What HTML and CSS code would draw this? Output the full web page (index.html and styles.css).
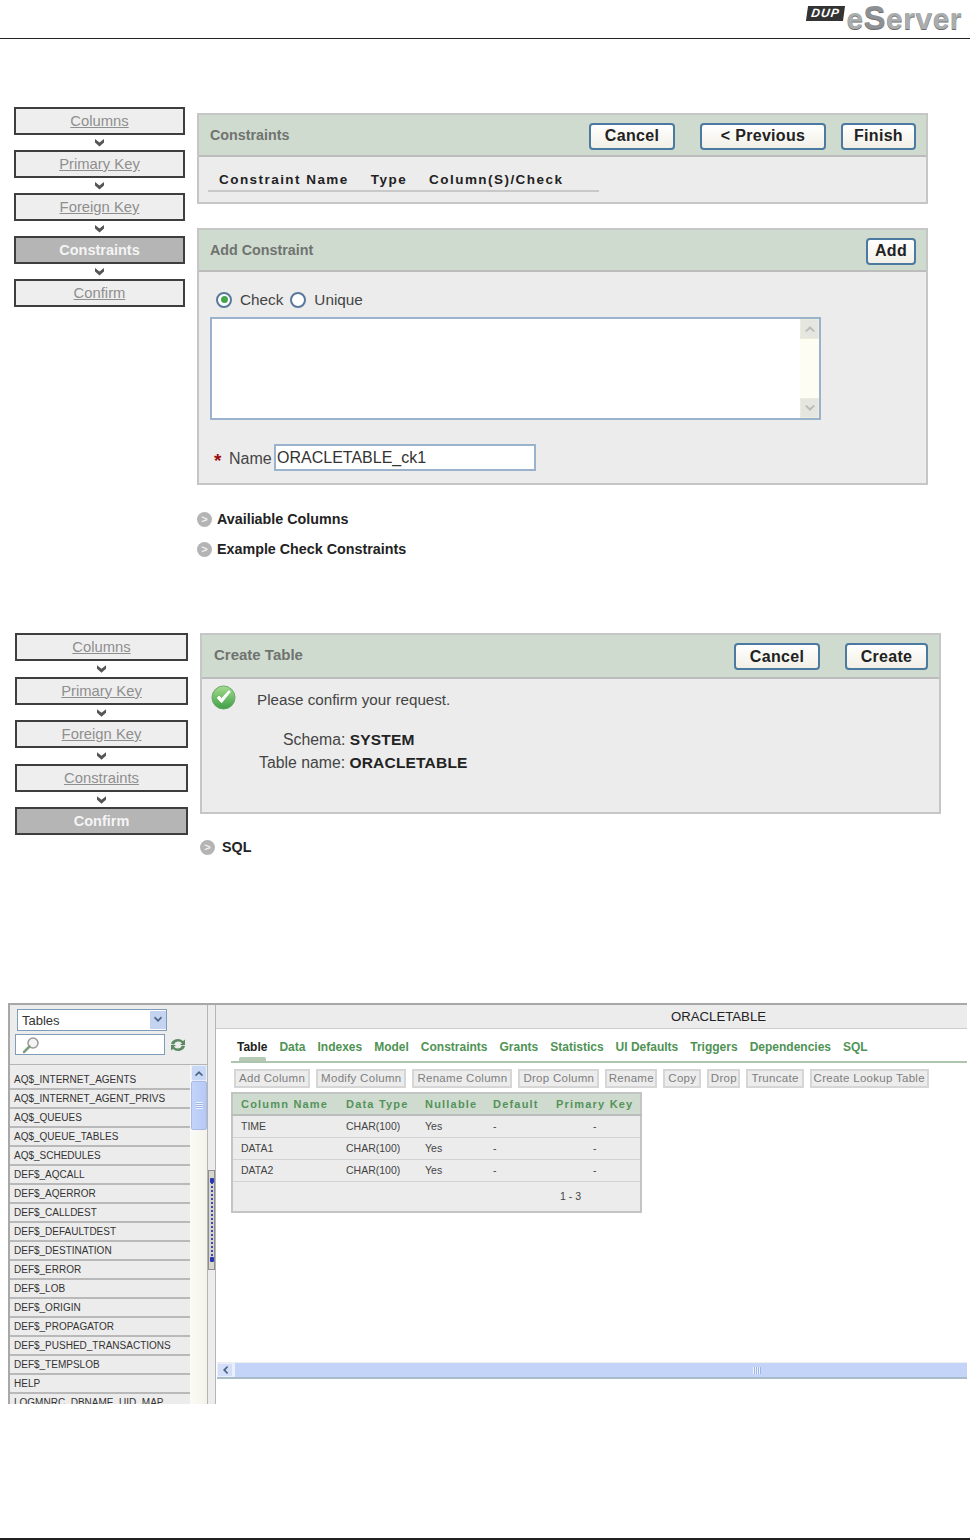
FILE: index.html
```html
<!DOCTYPE html>
<html lang="en">
<head>
<meta charset="utf-8">
<title>Create Table</title>
<link rel="stylesheet" href="styles.css">
</head>
<body>
<div class="page">
  <header class="top">
    <div class="logo">
      <span class="dup">DUP</span>
      <span class="eserver">e<b>S</b>erver</span>
    </div>
  </header>

  <section class="wiz wiz-one">
    <nav class="steps">
      <a class="step">Columns</a>
      <svg class="arrow" viewBox="0 0 15 15"><path d="M3 4l4.500 3.500L12 4v3.500L7.500 11.500 3 7.500z"/></svg>
      <a class="step">Primary Key</a>
      <svg class="arrow" viewBox="0 0 15 15"><path d="M3 4l4.500 3.500L12 4v3.500L7.500 11.500 3 7.500z"/></svg>
      <a class="step">Foreign Key</a>
      <svg class="arrow" viewBox="0 0 15 15"><path d="M3 4l4.500 3.500L12 4v3.500L7.500 11.500 3 7.500z"/></svg>
      <a class="step on">Constraints</a>
      <svg class="arrow" viewBox="0 0 15 15"><path d="M3 4l4.500 3.500L12 4v3.500L7.500 11.500 3 7.500z"/></svg>
      <a class="step">Confirm</a>
    </nav>
    <div class="main main-one">
      <div class="panel">
        <div class="phead">
          <h2>Constraints</h2>
          <button class="btn w-cancel">Cancel</button>
          <button class="btn w-prev">&lt; Previous</button>
          <button class="btn w-finish">Finish</button>
        </div>
        <div class="pbody cons-body">
          <div class="cons-cols"><span>Constraint Name</span><span>Type</span><span>Column(S)/Check</span></div>
        </div>
      </div>
      <div class="panel panel-add">
        <div class="phead">
          <h2>Add Constraint</h2>
          <button class="btn w-add">Add</button>
        </div>
        <div class="pbody add-body">
          <div class="radios">
            <span class="radio picked"></span><span class="rlabel">Check</span>
            <span class="radio"></span><span class="rlabel">Unique</span>
          </div>
          <div class="area">
            <div class="area-blank"></div>
            <div class="area-bar">
              <span class="area-btn"><svg viewBox="0 0 14 14"><path d="M2 9l5-5 5 5-1.500 1L7 7l-3.500 3z"/></svg></span>
              <span class="area-btn"><svg viewBox="0 0 14 14"><path d="M2 5l5 5 5-5-1.500-1L7 7 3.500 4z"/></svg></span>
            </div>
          </div>
          <div class="name-row">
            <span class="req">*</span><label>Name</label><input class="name-in" type="text" value="ORACLETABLE_ck1">
          </div>
        </div>
      </div>
      <div class="exp exp-first"><span class="exp-i">&gt;</span>Availiable Columns</div>
      <div class="exp exp-next"><span class="exp-i">&gt;</span>Example Check Constraints</div>
    </div>
  </section>

  <section class="wiz wiz-two">
    <nav class="steps">
      <a class="step">Columns</a>
      <svg class="arrow" viewBox="0 0 15 15"><path d="M3 4l4.500 3.500L12 4v3.500L7.500 11.500 3 7.500z"/></svg>
      <a class="step">Primary Key</a>
      <svg class="arrow" viewBox="0 0 15 15"><path d="M3 4l4.500 3.500L12 4v3.500L7.500 11.500 3 7.500z"/></svg>
      <a class="step">Foreign Key</a>
      <svg class="arrow" viewBox="0 0 15 15"><path d="M3 4l4.500 3.500L12 4v3.500L7.500 11.500 3 7.500z"/></svg>
      <a class="step">Constraints</a>
      <svg class="arrow" viewBox="0 0 15 15"><path d="M3 4l4.500 3.500L12 4v3.500L7.500 11.500 3 7.500z"/></svg>
      <a class="step on">Confirm</a>
    </nav>
    <div class="main main-two">
      <div class="panel">
        <div class="phead phead-two">
          <h2>Create Table</h2>
          <button class="btn w-cancel2">Cancel</button>
          <button class="btn w-create">Create</button>
        </div>
        <div class="pbody conf-body">
          <svg class="ok" viewBox="0 0 26 26">
            <defs><linearGradient id="okg" x1="0" y1="0" x2="0" y2="1"><stop offset="0" stop-color="#a5dc8f"/><stop offset="1" stop-color="#3f9f45"/></linearGradient></defs>
            <circle cx="13" cy="13" r="12" fill="url(#okg)" stroke="#6aa96c"/>
            <path d="M6.500 13.500l4.500 5 9-11.500-1.500-1-7.500 8-2.500-2.500z" fill="#fff" stroke="#fff"/>
          </svg>
          <div class="conf-msg">Please confirm your request.</div>
          <div class="conf-line conf-schema">Schema: <b>SYSTEM</b></div>
          <div class="conf-line conf-table">Table name: <b>ORACLETABLE</b></div>
        </div>
      </div>
      <div class="exp exp-sql"><span class="exp-i">&gt;</span>SQL</div>
    </div>
  </section>

  <section class="browser">
    <aside class="left">
      <div class="left-top">
        <div class="sel">Tables<span class="sel-btn"><svg viewBox="0 0 14 14"><path d="M3 5l4 4 4-4-1-1.500L7 6.500 4 3.500z"/></svg></span></div>
        <div class="search-row">
          <div class="search">
            <svg viewBox="0 0 18 18"><circle cx="11" cy="7" r="5" fill="#f4f4f4" stroke="#999" stroke-width="1.500"/><path d="M7.500 10.500L2 16" stroke="#7fa07f" stroke-width="2.500" stroke-linecap="round"/></svg>
          </div>
          <svg class="refresh" viewBox="0 0 18 18"><path d="M2 8a7 6 0 0 1 12-3l2-1.500V9h-5l2-1.800A4.500 4 0 0 0 5 8.500z" fill="#5d8a66"/><path d="M16 10a7 6 0 0 1-12 3l-2 1.500V9h5l-2 1.800A4.500 4 0 0 0 13 9.500z" fill="#5d8a66"/></svg>
        </div>
      </div>
      <div class="list-wrap">
        <ul class="list">
          <li>AQ$_INTERNET_AGENTS</li>
          <li>AQ$_INTERNET_AGENT_PRIVS</li>
          <li>AQ$_QUEUES</li>
          <li>AQ$_QUEUE_TABLES</li>
          <li>AQ$_SCHEDULES</li>
          <li>DEF$_AQCALL</li>
          <li>DEF$_AQERROR</li>
          <li>DEF$_CALLDEST</li>
          <li>DEF$_DEFAULTDEST</li>
          <li>DEF$_DESTINATION</li>
          <li>DEF$_ERROR</li>
          <li>DEF$_LOB</li>
          <li>DEF$_ORIGIN</li>
          <li>DEF$_PROPAGATOR</li>
          <li>DEF$_PUSHED_TRANSACTIONS</li>
          <li>DEF$_TEMPSLOB</li>
          <li>HELP</li>
          <li>LOGMNRC_DBNAME_UID_MAP</li>
        </ul>
        <div class="vbar">
          <span class="vbtn"><svg viewBox="0 0 14 14"><path d="M3 9l4-4 4 4-1 1.200L7 7.500l-3 2.700z"/></svg></span>
          <span class="vthumb"><i></i></span>
        </div>
      </div>
    </aside>
    <div class="split"><div class="grip"></div></div>
    <div class="right">
      <div class="right-title">ORACLETABLE</div>
      <div class="tabs">
        <span class="tab on">Table</span><span class="tab">Data</span><span class="tab">Indexes</span><span class="tab">Model</span><span class="tab">Constraints</span><span class="tab">Grants</span><span class="tab">Statistics</span><span class="tab">UI Defaults</span><span class="tab">Triggers</span><span class="tab">Dependencies</span><span class="tab">SQL</span>
      </div>
      <div class="tools">
        <span class="tool">Add Column</span><span class="tool">Modify Column</span><span class="tool">Rename Column</span><span class="tool">Drop Column</span><span class="tool tool-tight">Rename</span><span class="tool">Copy</span><span class="tool tool-tight">Drop</span><span class="tool">Truncate</span><span class="tool tool-long">Create Lookup Table</span>
      </div>
      <table class="cols">
        <thead><tr><th class="c1">Column Name</th><th class="c2">Data Type</th><th class="c3">Nullable</th><th class="c4">Default</th><th class="c5">Primary Key</th></tr></thead>
        <tbody>
          <tr><td>TIME</td><td>CHAR(100)</td><td>Yes</td><td>-</td><td class="mid">-</td></tr>
          <tr><td>DATA1</td><td>CHAR(100)</td><td>Yes</td><td>-</td><td class="mid">-</td></tr>
          <tr><td>DATA2</td><td>CHAR(100)</td><td>Yes</td><td>-</td><td class="mid">-</td></tr>
          <tr class="pager"><td colspan="5">1 - 3</td></tr>
        </tbody>
      </table>
      <div class="hbar">
        <span class="hbtn"><svg viewBox="0 0 14 14"><path d="M9 3L5 7l4 4 1.200-1L7.500 7l2.700-3z"/></svg></span>
        <span class="hthumb"><i></i></span>
      </div>
    </div>
  </section>
  <footer class="bottom"></footer>
</div>
</body>
</html>
```

FILE: styles.css
```css
* { box-sizing: border-box; }
html, body { margin: 0; padding: 0; background: #fff; }
body { font-family: "Liberation Sans", Arial, sans-serif; color: #333; }
.page { width: 970px; height: 1540px; display: flex; flex-direction: column; overflow: hidden; }

/* page header */
.top { height: 39px; border-bottom: 1px solid #222; display: flex; justify-content: flex-end; }
.logo { display: flex; align-items: flex-start; padding: 2px 8px 0 0; gap: 2px; }
.dup { width: 37px; height: 15px; margin-top: 4px; background: #333; color: #fff; font: italic bold 12px/15px "Liberation Sans", sans-serif; text-align: center; letter-spacing: 1px; transform: skewX(-8deg); }
.eserver { font-weight: bold; font-size: 30px; line-height: 32px; letter-spacing: 0.500px; color: #a9adae; text-shadow: 0 1px 0 #6e6e6e; }
.eserver b { font-size: 33px; color: #8d9193; }

/* wizard layout */
.wiz { display: flex; }
.wiz-one { margin-top: 68px; padding-left: 14px; }
.wiz-two { margin-top: 75px; padding-left: 15px; }
.steps { display: flex; flex-direction: column; flex: none; }
.wiz-one .steps { width: 171px; }
.wiz-two .steps { width: 173px; }
.wiz-two .arrow { height: 15.500px; }
.step { height: 28px; border: 2px solid #3e3e3e; background: #eee; color: #8f8f8f; font-size: 14.800px; line-height: 25px; text-align: center; text-decoration: underline; }
.step.on { background: #b5b5b5; color: #f4f4f4; font-weight: bold; font-size: 14.500px; text-decoration: none; }
.arrow { display: block; width: 15px; height: 15px; margin: 0 auto; fill: #555; }
.main-one { width: 731px; margin: 6px 0 0 12px; }
.main-two { width: 741px; margin: 0 0 0 12px; }

/* panels */
.panel { border: 2px solid #c6c6c6; background: #ececec; }
.panel-add { margin-top: 24px; }
.phead { height: 42px; background: #d0dbd0; border-bottom: 2px solid #bcbcbc; display: flex; align-items: center; padding: 0 0 0 11px; }
.phead-two { height: 44px; padding-left: 12px; }
.phead h2 { margin: 0; font-size: 14.300px; font-weight: bold; color: #6f736f; flex: 1; }
.phead-two h2 { font-size: 15px; padding-bottom: 3px; }
.btn { height: 27px; margin-top: 2px; border: 2px solid #4b7aa0; border-radius: 4px; background: linear-gradient(#fff, #f1efe6); color: #222; font: bold 16px "Liberation Sans", sans-serif; padding: 0; letter-spacing: 0.3px; }
.phead-two .btn { margin-top: 1px; }
.w-cancel { width: 86px; margin-right: 25px; }
.w-prev { width: 126px; margin-right: 15px; }
.w-finish { width: 75px; margin-right: 10px; }
.w-add { width: 50px; margin-right: 10px; }
.w-cancel2 { width: 86px; margin-right: 25px; }
.w-create { width: 83px; margin-right: 11px; }
.cons-body { height: 45px; padding: 14px 0 0 9px; }
.cons-cols { width: 391px; height: 21px; border-bottom: 2px solid #c8c8c8; display: flex; gap: 22px; padding-left: 11px; font-size: 13.500px; font-weight: bold; letter-spacing: 1.450px; color: #222; line-height: 17px; }
.add-body { height: 211px; padding: 18px 0 0 11px; }
.radios { display: flex; align-items: center; height: 19px; font-size: 15.300px; color: #444; padding-left: 6px; }
.radio { width: 16px; height: 16px; flex: none; border: 2px solid #58799c; border-radius: 50%; background: #fff; display: flex; align-items: center; justify-content: center; }
.radio.picked::after { content: ""; width: 7px; height: 7px; border-radius: 50%; background: #46a44c; }
.rlabel { margin: 0 7px 0 8px; }
.area { width: 611px; height: 103px; margin-top: 8px; border: 2px solid #9ab2cc; background: #fff; display: flex; }
.area-blank { flex: 1; }
.area-bar { width: 19px; background: #fdfdf4; display: flex; flex-direction: column; justify-content: space-between; }
.area-btn { height: 20px; background: #e6e6e0; border: 1px solid #ececdc; display: flex; align-items: center; justify-content: center; }
.area-btn svg { width: 14px; height: 14px; fill: #bcbcb8; }
.name-row { display: flex; align-items: center; margin: 24px 0 0 4px; font-size: 16px; color: #444; }
.req { color: #9b1010; font-weight: bold; font-size: 19px; line-height: 14px; width: 15px; padding-top: 7px; }
.name-row label { width: 44px; padding-top: 2px; }
.name-in { width: 262px; height: 27px; margin: 0 0 0 1px; padding: 0 0 0 1px; border: 2px solid #9ab2cc; background: #fff; font: 16px "Liberation Sans", sans-serif; color: #333; outline: 0; }
.exp { display: flex; align-items: center; font-size: 14.300px; font-weight: bold; color: #222; height: 18px; }
.exp-first { margin-top: 25px; }
.exp-next { margin-top: 12px; }
.exp-sql { margin-top: 24px; }
.exp-i { width: 15px; height: 15px; border-radius: 50%; background: #b4b4b4; color: #f0f0f0; font-size: 11px; line-height: 14px; text-align: center; margin-right: 5px; }
.exp-sql .exp-i { margin-right: 7px; }

/* confirm */
.conf-body { height: 133px; position: relative; color: #444; }
.ok { position: absolute; left: 9px; top: 6px; width: 25px; height: 25px; }
.conf-msg { padding: 11px 0 0 55px; font-size: 15.200px; line-height: 20px; }
.conf-line { font-size: 15.800px; line-height: 23px; }
.conf-schema { margin-top: 18px; padding-left: 81px; }
.conf-table { padding-left: 57px; }
.conf-line b { font-size: 15.500px; color: #222; font-weight: bold; letter-spacing: 0.200px; }

/* browser */
.browser { margin: 147px 0 0 8px; width: 959px; height: 401px; display: flex; overflow: hidden; border-top: 2px solid #a8a8a8; }
.left { width: 199px; flex: none; background: #ececec; border-left: 2px solid #a8a8a8; display: flex; flex-direction: column; }
.left-top { height: 59px; padding: 4px 0 0 5px; }
.sel { width: 150px; height: 22px; margin-left: 2px; border: 1px solid #7f9db9; background: #fff; font-size: 13px; line-height: 21px; padding-left: 4px; color: #333; display: flex; justify-content: space-between; }
.sel-btn { width: 16px; height: 18px; margin: 1px 0 0; background: #c3d3f0; display: flex; align-items: center; justify-content: center; }
.sel-btn svg, .vbtn svg, .hbtn svg { width: 14px; height: 14px; fill: #4c6489; }
.search-row { display: flex; align-items: center; margin-top: 3px; gap: 4px; }
.search { width: 150px; height: 21px; border: 1px solid #7f9db9; background: #fff; padding: 1px 0 0 6px; }
.search svg { width: 18px; height: 18px; display: block; }
.refresh { width: 18px; height: 18px; }
.list-wrap { flex: 1; display: flex; border-top: 1px solid #b5b5b5; border-right: 1px solid #b5b5b5; min-height: 0; }
.list { width: 180px; margin: 0; padding: 6px 0 0; list-style: none; font-size: 10px; flex: none; }
.list li { height: 19px; border-bottom: 2px solid #b9b9b9; padding-left: 4px; line-height: 18px; color: #333; white-space: nowrap; overflow: hidden; }
.vbar { flex: 1; background: linear-gradient(90deg, #fbfbf6, #f4f3ea); display: flex; flex-direction: column; padding-left: 1px; }
.vbtn { height: 16px; background: #c9d8f5; border: 1px solid #e8eefc; border-radius: 2px; display: flex; align-items: center; justify-content: center; }
.vthumb { height: 49px; background: linear-gradient(90deg, #c3d4fa, #b6c9f5); border: 1px solid #a7bbe5; border-radius: 2px; display: flex; align-items: center; justify-content: center; }
.vthumb i { width: 7px; height: 7px; background: repeating-linear-gradient(#eef3ff 0 1px, #9db4e6 1px 2px); }
.split { width: 9px; flex: none; background: #ececec; border-left: 1px solid #b5b5b5; border-right: 1px solid #b5b5b5; padding-top: 165px; }
.grip { height: 100px; padding: 7px 0; background: repeating-linear-gradient(#3a46c0 0 2px, transparent 2px 4px) center 7px / 2px 84px no-repeat, #d8d6cc; border: 1px solid #8e8e8e; display: flex; flex-direction: column; justify-content: space-between; align-items: center; }
.grip::before, .grip::after { content: ""; width: 4px; height: 5px; background: #2a36b8; border-radius: 1px; }
.right { flex: 1; min-width: 0; background: #fff; }
.right-title { height: 24px; background: #ececec; border-bottom: 1px solid #ccc; font-size: 13.200px; line-height: 23px; color: #222; text-align: center; padding-left: 254px; }
.tabs { height: 34px; margin: 0 0 0 15px; padding: 10px 0 0 6px; display: flex; gap: 12px; border-bottom: 2px solid #adc4ad; font-size: 12px; font-weight: bold; color: #4f9354; }
.tab { line-height: 17px; position: relative; white-space: nowrap; }
.tab.on { color: #222; }
.tab.on::after { content: ""; position: absolute; left: 2px; right: 1px; top: 18px; height: 4px; background: #b5c9b5; border-radius: 2px 2px 0 0; }
.tools { display: flex; gap: 6px; margin: 6px 0 0 18px; }
.tool { height: 19px; padding: 0 3px; border: 2px solid #d6d6d6; background: #ececec; color: #7e7e7e; font-size: 11.500px; line-height: 15px; letter-spacing: 0.280px; white-space: nowrap; font-weight: normal; }
.tool-tight { padding: 0 1.500px; }
.tool-long { padding: 0 2px; }
.cols { width: 411px; margin: 4px 0 0 15px; border: 2px solid #c4c4c4; border-collapse: collapse; table-layout: fixed; background: #ececec; font-size: 10.500px; }
.cols th { height: 22px; padding: 0 0 0 8px; text-align: left; background: #d0dbd0; border-bottom: 2px solid #bcbcbc; color: #53935a; font-size: 11px; letter-spacing: 1.200px; white-space: nowrap; }
.cols td { height: 22px; padding: 0 0 0 8px; border-bottom: 1px solid #d2d2d2; color: #444; }
.cols td.mid { padding: 0 0 0 45px; }
.cols .pager td { height: 31px; border-bottom: 0; padding-left: 327px; }
.c1 { width: 106px; }
.c2 { width: 79px; }
.c3 { width: 68px; }
.c4 { width: 63px; }
.hbar { height: 17px; margin: 149px 0 0 1px; background: #c4d4f8; border-top: 1px solid #eee; border-bottom: 2px solid #a8bcc8; display: flex; }
.hbtn { width: 16px; background: #d3dff8; border: 1px solid #e8eefc; display: flex; align-items: center; justify-content: center; }
.hthumb { flex: 1; display: flex; align-items: center; justify-content: center; border-left: 2px solid #eaf0ff; padding-left: 312px; }
.hthumb i { width: 8px; height: 7px; background: repeating-linear-gradient(90deg, #eef3ff 0 1px, #9db4e6 1px 2px); }
.bottom { margin-top: auto; height: 2px; background: #222; }
```
